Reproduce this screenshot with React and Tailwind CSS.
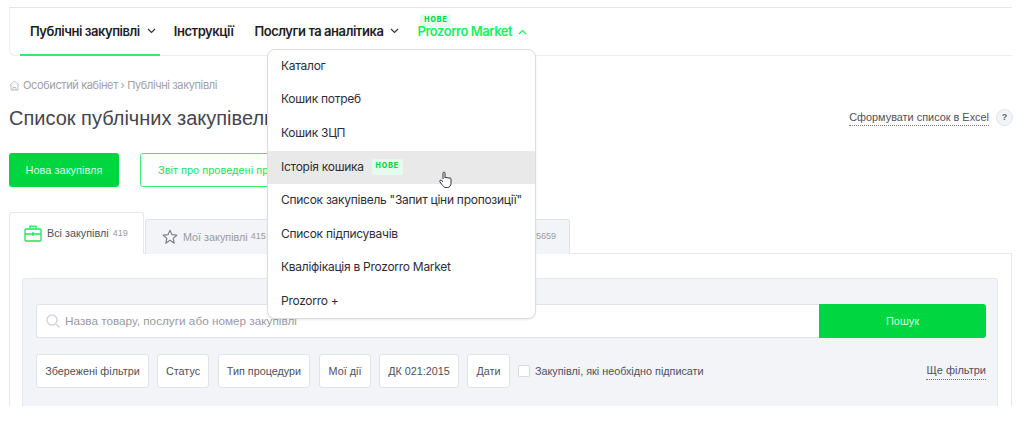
import React from "react";

const BODY = "font-['Liberation_Sans','Noto_Sans',sans-serif]";
const INTER = "font-['Inter','Noto_Sans',sans-serif]";

function Chevron({ up, className }) {
  return (
    <svg width="9" height="6" viewBox="0 0 9 6" fill="none" stroke="currentColor" strokeWidth="1.2" className={className}>
      <path d={up ? "M1 5l3.5-3.5L8 5" : "M1 1l3.5 3.5L8 1"} />
    </svg>
  );
}

function Nove({ className }) {
  return (
    <span className={`flex items-center justify-center bg-[#e6fbef] text-[#00d63f] text-[7px] font-extrabold tracking-[1px] rounded-[2px] ${className}`}>
      НОВЕ
    </span>
  );
}

function NavItem({ children, active, chevron, className = "" }) {
  return (
    <div className={`relative h-full flex items-center text-[13px] font-semibold tracking-[-0.45px] text-[#1d1d24] ${className}`}>
      {children}
      {chevron && <Chevron className="ml-[7px] mt-[-1px] text-[#33333a]" />}
      {active && <div className="absolute left-[-10px] right-[-4px] bottom-[-1px] h-[2px] bg-[#2bf06a]" />}
    </div>
  );
}

const menuItems = [
  "Каталог",
  "Кошик потреб",
  "Кошик ЗЦП",
  "Історія кошика",
  'Список закупівель "Запит ціни пропозиції"',
  "Список підписувачів",
  "Кваліфікація в Prozorro Market",
  "Prozorro +",
];

function Dropdown() {
  return (
    <div className={`absolute left-[267px] top-[49px] w-[269px] h-[270px] bg-white border border-[#dcdde0] rounded-[8px] shadow-[0_1px_2px_rgba(0,0,0,0.08)] overflow-hidden z-20 ${INTER}`}>
      {menuItems.map((t, i) => (
        <div key={t} className={`h-[33.6px] flex items-center pl-[13px] pb-[2px] text-[12px] tracking-[-0.27px] text-[#2e2e35] ${i === 3 ? "bg-[#e9e9e9]" : ""}`}>
          {t}
          {i === 3 && <Nove className="ml-[8px] w-[31px] h-[16px]" />}
        </div>
      ))}
    </div>
  );
}

function HandCursor() {
  return (
    <svg width="16" height="18" viewBox="0 0 16 18" className="absolute left-[438px] top-[171px] z-30">
      <path
        d="M5 8V2.2c0-1.5 2-1.5 2 0V7c0-.9 2-.9 2 .2 0-.9 2-.9 2 .3 0-.8 2-.7 2 .5v4.3c0 2.2-1.3 4.2-3.6 4.2H7.8c-1.4 0-2.2-.7-3-1.8L2 11c-.9-1.3.6-2.5 1.7-1.5L5 11"
        fill="#fff"
        stroke="#33333a"
        strokeWidth="1"
        strokeLinejoin="round"
      />
    </svg>
  );
}

function Filter({ children, className = "" }) {
  return (
    <div className={`h-[34px] flex items-center justify-center bg-white border border-[#e0e3ea] rounded-[3px] text-[10.8px] text-[#50505a] ${className}`}>
      {children}
    </div>
  );
}

export default function App() {
  return (
    <div className={`relative w-[1024px] h-[406px] overflow-hidden bg-white ${BODY}`}>
      <Dropdown />
      <HandCursor />

      <div className="pl-[9px] pr-[12px] pt-[7px]">
        {/* nav */}
        <div className={`h-[49px] flex items-center pl-[20px] border border-t-[#e6e6e8] border-x-[#eeeeef] border-b-[#eeeeef] border-r-0 rounded-bl-[6px] ${INTER}`}>
          <NavItem active chevron>Публічні закупівлі</NavItem>
          <NavItem className="ml-[18px]">Інструкції</NavItem>
          <NavItem chevron className="ml-[21px]">Послуги та аналітика</NavItem>
          <div className="relative ml-[18px] h-full flex items-center text-[13px] font-semibold tracking-[-0.45px] text-[#17f05c]">
            <Nove className="absolute left-[3px] top-[6px] w-[31px] h-[13px]" />
            <span className="relative">Prozorro Market</span>
            <Chevron up className="ml-[6px]" />
          </div>
        </div>

        {/* breadcrumbs */}
        <div className={`flex items-center mt-[21px] h-[16px] text-[11px] tracking-[-0.38px] text-[#a0a0a8] ${INTER}`}>
          <svg width="11" height="11" viewBox="0 0 11 11" fill="none" stroke="#b0b0b6" strokeWidth="0.8" className="mr-[3px]">
            <path d="M.8 5L5.5 1l4.7 4M2 4.5V10h7V4.5M4 10V7.5h3V10" />
          </svg>
          Особистий кабінет › Публічні закупівлі
        </div>

        {/* title row */}
        <div className="flex items-center justify-between mt-[11px] h-[28px]">
          <div className="text-[20px] text-[#45454e] whitespace-nowrap">Список публічних закупівель</div>
          <div className="flex items-center mr-[-1px]">
            <span className="mb-[1px] text-[10.9px] text-[#50505a] border-b border-dotted border-[#777]">Сформувати список в Excel</span>
            <span className="ml-[7px] w-[17px] h-[17px] rounded-full bg-[#f2f4f8] border border-[#e0e3ea] flex items-center justify-center text-[9px] font-bold text-[#666]">?</span>
          </div>
        </div>

        {/* action buttons */}
        <div className="flex mt-[21px] text-[11px]">
          <div className="w-[110px] h-[34px] rounded-[3px] bg-[#00d63f] text-[#d9fbe3] flex items-center justify-center">Нова закупівля</div>
          <div className="ml-[21px] w-[200px] h-[34px] rounded-[3px] bg-white border border-[#3cec78] text-[#1ce35c] flex items-center pl-[17px] whitespace-nowrap">Звіт про проведені процедури</div>
        </div>

        {/* tabs */}
        <div className="relative flex items-end mt-[25px] h-[42px] text-[10.8px]">
          <div className="relative z-10 w-[135px] h-[42px] flex items-center pl-[14px] bg-white border border-[#e6e8ee] border-b-0 rounded-t-[3px]">
            <svg width="18" height="17" viewBox="0 0 18 17" fill="none" stroke="#1be65c" strokeWidth="1.3" className="mr-[5px]">
              <rect x="1" y="4" width="16" height="12" rx="1" />
              <path d="M6 4V1.2h6V4M1 9h16M9 7v4M7 9h4" />
            </svg>
            <span className="text-[#50505a]">Всі закупівлі</span>
            <span className="ml-[4px] text-[9px] text-[#9a9aa3]">419</span>
          </div>
          <div className="w-[425px] ml-[1px] h-[35px] flex items-center pl-[16px] bg-[#f2f4f8] border border-[#e0e3ea] border-b-0 rounded-t-[3px]">
            <svg width="16" height="16" viewBox="0 0 16 16" fill="none" stroke="#80808a" strokeWidth="1.2" className="mr-[5px]">
              <path d="M8 1.3l2 4.4 4.8.5-3.6 3.2 1 4.8L8 11.3l-4.2 2.9 1-4.8L1.2 6.2 6 5.7z" strokeLinejoin="round" />
            </svg>
            <span className="text-[#9a9aa3]">Мої закупівлі</span>
            <span className="ml-[3px] text-[9px] text-[#9a9aa3]">415</span>
            <span className="ml-auto mr-[13px] text-[9px] text-[#9a9aa3]">5659</span>
          </div>
        </div>

        {/* panel */}
        <div className="h-[153px] mt-[-1px] pt-[24px] pl-[12px] pr-[13px] border border-[#e6e8ee] border-b-0">
          <div className="h-[128px] bg-[#f2f4f8] border border-[#e6e8ee] border-b-0 rounded-t-[3px] pt-[25px] px-[13px]">
            <div className="flex h-[34px] mr-[-2px]">
              <div className="flex-1 flex items-center pl-[8px] bg-white border border-[#e0e3ea] border-r-0 rounded-l-[3px]">
                <svg width="16" height="16" viewBox="0 0 16 16" fill="none" stroke="#d0d3da" strokeWidth="1.4" className="mr-[4px]">
                  <circle cx="7" cy="7" r="5" />
                  <path d="M11 11l3.5 3.5" />
                </svg>
                <span className="text-[11.75px] text-[#9a9aa3]">Назва товару, послуги або номер закупівлі</span>
              </div>
              <div className="w-[167px] rounded-r-[3px] bg-[#00d63f] text-[#d9fbe3] text-[11px] flex items-center justify-center">Пошук</div>
            </div>
            <div className="flex items-center mt-[16px] mr-[-2px]">
              <Filter className="w-[113px]">Збережені фільтри</Filter>
              <Filter className="w-[52px] ml-[8px]">Статус</Filter>
              <Filter className="w-[92px] ml-[9px]">Тип процедури</Filter>
              <Filter className="w-[52px] ml-[9px]">Мої дії</Filter>
              <Filter className="w-[80px] ml-[8px]">ДК 021:2015</Filter>
              <Filter className="w-[43px] ml-[8px]">Дати</Filter>
              <div className="ml-[8px] w-[12px] h-[12px] bg-white border border-[#d8dbe2] rounded-[2px]" />
              <span className="ml-[5px] text-[10.8px] text-[#50505a]">Закупівлі, які необхідно підписати</span>
              <span className="ml-auto text-[11px] text-[#50505a] border-b border-dotted border-[#777]">Ще фільтри</span>
            </div>
          </div>
        </div>
      </div>
    </div>
  );
}
